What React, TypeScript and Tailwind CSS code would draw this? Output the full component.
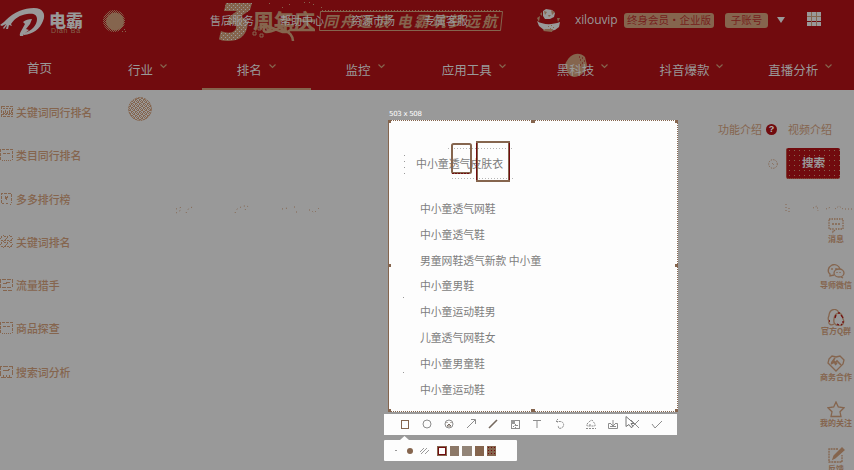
import React from "react";

const FONT = "font-['Noto_Sans_CJK_SC','Noto_Sans',sans-serif]";

const navItems = ["行业", "排名", "监控", "应用工具", "黑科技", "抖音爆款", "直播分析"];
const sideItems = ["关键词同行排名", "类目同行排名", "多多排行榜", "关键词排名", "流量猎手", "商品探查", "搜索词分析"];
const railItems = ["消息", "导师微信", "官方Q群", "商务合作", "我的关注", "反馈"];
const suggestions = [
  "中小童透气网鞋",
  "中小童透气鞋",
  "男童网鞋透气新款 中小童",
  "中小童男鞋",
  "中小童运动鞋男",
  "儿童透气网鞋女",
  "中小童男童鞋",
  "中小童运动鞋",
];

function Logo() {
  return (
    <svg width="46" height="30" viewBox="0 0 46 30" className="shrink-0">
      <path d="M6 12C14 4 24 0 34 0c9 0 12 6 9 13-3 8-10 13-19 14l0-2c8-2 13-8 13-14 0-5-4-6-10-5-7 1-12 4-16 10l1 2-3-1-1 4-2 0 1-4-3 4-1-1 3-4-4 2-2-1 4-3Z" fill="#999" />
      <path d="M23 14c2-2 6-3 9-3l-2 5-4 5 3 1-5 4-1 2-3 0c-1-3 2-6 5-12Z" fill="#999" />
    </svg>
  );
}

function Ball() {
  return (
    <svg width="24" height="24" viewBox="0 0 24 24" className="ml-[18px] mt-1 shrink-0">
      <defs>
        <pattern id="ballDots" width="2" height="2" patternUnits="userSpaceOnUse">
          <path d="M0 0h1v1H0zM1 1h1v1H1z" fill="#85654e" shapeRendering="crispEdges" />
        </pattern>
      </defs>
      <circle cx="12" cy="11" r="11" fill="url(#ballDots)" />
      <circle cx="13" cy="11.500" r="9" fill="#85654e" />
      <path d="M22 19h1v1h-1zM20 21h1v1h-1zM23 21h1v1h-1z" fill="#85654e" />
    </svg>
  );
}

function Seal() {
  return (
    <svg width="24" height="24" viewBox="0 0 24 24" className="mt-[7px]">
      <defs>
        <pattern id="sealDots" width="4" height="4" patternUnits="userSpaceOnUse">
          <path d="M0 0h1v1H0zM2 0h1v1H2zM1 1h2v1H1zM3 2h1v1H3zM0 2h1v1H0zM1 3h1v1H1zM3 3h1v1H3z" fill="#85654e" shapeRendering="crispEdges" />
        </pattern>
      </defs>
      <circle cx="12" cy="12" r="11.500" fill="url(#sealDots)" />
      <circle cx="12" cy="12" r="11.300" fill="none" stroke="#85654e" strokeDasharray="2 1" />
    </svg>
  );
}

function Panda() {
  return (
    <svg width="25" height="25" viewBox="0 0 25 25" className="shrink-0">
      <path d="M7 3l3-2 6 1 3 3-1 4-4 2-5 0-2-3ZM1 13c6 4 15 4 23 1l-1 5-4 3-5 1-6-1-5-4Z" fill="#999" />
      <path d="m8 3 3 1-2 3Zm7-1 4 2-3 3ZM12 7h3l-2 2ZM7 23l2-2h8l-1 3ZM1 10l3-2-1 6ZM21 10l3 0-2 4ZM4 6l2-2 0 4ZM12 18h1v1h-1zM15 17h1v1h-1zM17 19h1v1h-1zM14 20h1v1h-1z" fill="#85654e" />
    </svg>
  );
}

function SideIcon({ index }: { index: number }) {
  return (
    <svg width="13" height="13" viewBox="0 0 13 13" fill="none" stroke="#85654e" strokeWidth="1" className="shrink-0" shapeRendering="crispEdges">
      {index === 0 && <><rect x="1.500" y="1.500" width="11" height="10" strokeDasharray="3 1" /><path d="M3 3.500h8M3 8.500h8M2 9.500h10" strokeDasharray="2 1" /><path d="M3 7.500V6m2 1.500V5m2 2.500V6m2 1.500V5m2 2.500V5" /></>}
      {(index === 1 || index === 5) && <><path d="M.5 12V1.500h12V12" strokeDasharray="3 1" /><path d="M2 12.500h10" strokeDasharray="1 1" /><path d="m3 6 1-1 2 1m1 0 1-1 2 1" /></>}
      {index === 2 && <><path d="M1.500 11V1.500h10V11" strokeDasharray="3 1" /><path d="m2 12 2-1m2 1 2-1m2 1h1M5.500 4v2l1 1 1-3" /></>}
      {index === 3 && <><circle cx="3.500" cy="3.500" r="2.700" strokeDasharray="3 1" /><circle cx="9.500" cy="3.500" r="2.700" strokeDasharray="3 1" /><circle cx="3.500" cy="9.500" r="2.700" strokeDasharray="3 1" /><circle cx="9.500" cy="9.500" r="2.700" strokeDasharray="3 1" /></>}
      {index === 4 && <><path d="M.5 10V1.500h12v7M2 9.500h4M7 9.500h5M3 12.500h9" strokeDasharray="4 1" /><path d="m3 5 2 1 3-2 2 1" /></>}
      {index === 6 && <><path d="M.5 11V1.500h11.500V11M1 12.500h11" strokeDasharray="5 1" /><path d="m3 6 2-1 2 1 3-2M3.500 12v-2M6.500 12v-2M9.500 12v-2" /></>}
    </svg>
  );
}

function RailIcon({ index }: { index: number }) {
  return (
    <svg width="18" height="17" viewBox="0 0 18 17" fill="none" stroke="#85654e" strokeWidth="1.3">
      {index === 0 && <><path d="M2 2h14v10H9l-3 3v-3H2Z" strokeDasharray="1.500 1" /><path d="M5 7h2m1 0h2m1 0h2" strokeWidth="1.600" /></>}
      {index === 1 && <><path d="M7 12 3 13l0-2C0 9 1 4 5 2c4-1 7 1 8 4" /><ellipse cx="12" cy="10" rx="5" ry="4" /><path d="m14 14 2 1M5 5v2M9 5v2M10 9v1M13 9v1" /></>}
      {index === 2 && <><path d="M7 15C4 17 1 15 2 12 0 9 2 8 2 6 3-1 10-1 12 4" /><path d="M8 15c-2-2-1-4-1-5 0-4 3-6 5-6s4 3 4 6c2 3 0 5-1 6-2 1-5 1-7-1Z" /><path d="M12 3v2M9 6 8 9m6-3 2 3m0 3v2m-6 1 2 1m2 0 1-1M2 12h1" stroke="#710b0e" /></>}
      {index === 3 && <><path d="M2 4 5 1l4 1 4-1 4 4-1 4-7 7L1 8Z" /><path d="m8 3-3 4 3 1 2-2 4 4M4 9l4-3m0 4 2-2" strokeWidth="1.600" /></>}
      {index === 4 && <path d="m9 1 2.300 5 5.700.8-4 4 1 4.700H4l1-4.700-4-4L6.700 6Z" />}
      {index === 5 && <><path d="M11 2H2v13h13V8" strokeDasharray="2 .7" /><path d="m7 9 8-8 2 2-9 8-2 1Z" fill="#85654e" /></>}
    </svg>
  );
}

function Tool({ children, className }: { children: React.ReactNode; className: string }) {
  return (
    <span className={`flex shrink-0 justify-center ${className}`}>
      <svg width="12" height="12" viewBox="0 0 12 12" fill="none" stroke="#8d8d8d" strokeWidth="1">
        {children}
      </svg>
    </span>
  );
}

function Banner() {
  return (
    <svg width="310" height="45" viewBox="0 0 310 45" className="absolute left-[204px] top-0" fontFamily="'Noto Sans CJK SC', sans-serif">
      <defs>
        <pattern id="speckle" width="4" height="4" patternUnits="userSpaceOnUse">
          <rect width="4" height="4" fill="#85654e" />
          <path d="M1 1h1v1H1zM3 3h1v1H3z" fill="#999" shapeRendering="crispEdges" />
        </pattern>
      </defs>
      <path d="M22 3h26l-2 7-10 7c7 1 9 4 7 11-2 9-9 13-19 13-5 0-8-1-9-2l2-8c7 3 14 2 15-3 1-4-2-4-9-4l2-7 8-6H20Z" fill="url(#speckle)" />
      <text x="49" y="29" fontSize="20" fontWeight="900" fill="#85654e" textLength="62" lengthAdjust="spacingAndGlyphs">周年庆</text>
      <path d="M58 24 76 31c7 3 12-1 11-4-2-3-8-1-14 2-11 5-16 3-12-2M74 26c8 7 14 5 15 15M87 30h24" stroke="#85654e" strokeWidth="2.500" fill="none" />
      <path d="M54 27h3v3h-3zM49 32h3v3h-3zM56 34h3v3h-3z" fill="none" stroke="#85654e" />
      <path d="M65 3h1v1h-1zM78 7h1v1h-1zM85 4h1v1h-1zM100 2h1v1h-1zM105 2h1v1h-1zM109 4h1v1h-1zM117 7h1v1h-1z" fill="#85654e" />
      <path d="M116.500 11.500h182l-2 19h-181Z" stroke="#85654e" fill="none" />
      <path d="M118 10.500h180" stroke="#85654e" strokeDasharray="1 2" />
      <text x="119" y="27" fontSize="15" fontWeight="700" fontStyle="italic" fill="#85654e" textLength="174">同舟逐浪 电霸筑梦远航</text>
    </svg>
  );
}

function Header() {
  return (
    <header className="relative flex h-[90px] flex-col bg-[#710b0e] text-[#999]">
      <Banner />
      <div className="relative flex h-10 items-center">
        <div className="flex w-[84px] shrink-0 items-center pt-[5px]">
          <Logo />
          <div className="flex flex-col pl-[3px]">
            <span className="whitespace-nowrap text-[17px] font-black leading-[17px]">电霸</span>
            <span className="pl-0.5 font-['Liberation_Sans',sans-serif] text-[7px] leading-[6px] tracking-[0.7px] text-[#85654e]">Dian Ba</span>
          </div>
        </div>
        <Ball />
        <div className="ml-[84px] flex w-[260px] shrink-0 whitespace-nowrap text-[11px] leading-4">
          <span className="w-[70px]">售后服务</span>
          <span className="w-[71px]">帮助中心</span>
          <span className="w-[73px]">资源市场</span>
          <span>专属客服</span>
        </div>
        <div className="ml-[66px] flex shrink-0 items-center">
          <Panda />
          <span className="ml-[14px] w-[42px] whitespace-nowrap font-['Open_Sans','Noto_Sans',sans-serif] text-[12px] leading-4 tracking-[-0.1px]">xilouvip</span>
          <span className="ml-[7px] flex h-[15px] w-[90px] items-center justify-center whitespace-nowrap rounded-[3px] bg-[#85654e] text-[10.500px] text-[#710b0e]/80">终身会员·企业版</span>
          <span className="ml-[11px] flex h-[15px] w-[43px] items-center justify-center whitespace-nowrap rounded-[3px] bg-[#85654e] text-[10.500px] text-[#710b0e]/80">子账号</span>
          <svg width="8" height="6" viewBox="0 0 8 6" className="ml-[9px]"><path d="M0 0h8L4 6Z" fill="#999" /></svg>
          <svg width="14" height="14" viewBox="0 0 14 14" className="-mt-0.5 ml-[22px]" shapeRendering="crispEdges">
            <path d="M4.500 0v14M9.500 0v14M0 4.500h14" stroke="#85654e" />
            {[0, 5, 10].map((y) => [0, 5, 10].map((x) => <rect key={`${x}-${y}`} x={x} y={y} width="4" height="4" fill="#999" />))}
          </svg>
        </div>
      </div>
      <nav className="relative flex h-[50px] text-[12.500px] leading-[18px]">
        <span className="w-[93px] shrink-0 pl-[27px] pt-[19px]">首页</span>
        {navItems.map((name, i) => (
          <div key={name} className={`relative flex w-[108.800px] shrink-0 justify-center pt-[21px] ${i === 1 ? "border-b-2 border-[#85654e]" : ""}`}>
            {i === 4 && (
              <svg width="28" height="24" viewBox="0 0 28 24" className="absolute left-[32px] top-[13px]">
                <path d="M5 12C8 2 18-3 25 4l2 8c-1 7-7 12-13 12-5-1-6-3-9-12Z" fill="#85654e" />
                <path d="M19 4h1m2 1h1m-3 2h1m3 1h1m-3 2h1m-3 2h1" stroke="#710b0e" />
              </svg>
            )}
            <span className="relative">{name}</span>
            <svg width="7" height="5" viewBox="0 0 7 5" className="relative ml-[7px] mt-[3px]" fill="none" stroke="#85654e" strokeWidth="1.200"><path d="m.5.500 3 3 3-3" /></svg>
          </div>
        ))}
      </nav>
    </header>
  );
}

function Capture() {
  return (
    <div className="absolute left-[384px] top-[109px] w-[294px]">
      <div className="h-[11px] pl-[5px] font-['DejaVu_Sans',sans-serif] text-[7px] leading-[10px] tracking-[-0.300px] text-white">503 x 508</div>
      <div className="relative ml-[4px] h-[292px] w-[290px] border border-dotted border-[#85654e] bg-[#fdfdfd] [border-left-style:solid]">
        <div className="pl-[27px] pt-[33px] text-[10.900px] leading-[18px] text-[#7d7d7d]">中小童透气皮肤衣</div>
        <ul className="mt-[24px] pl-[31px] text-[10.800px] text-[#7d7d7d]">
          {suggestions.map((s) => <li key={s} className="h-[25.800px] whitespace-pre leading-[25.800px]">{s}</li>)}
        </ul>
        <svg width="290" height="292" viewBox="0 0 290 292" className="absolute -left-px -top-px" fill="none">
          <path d="M60 28.500h64M64 58.500h62" stroke="#b5b5b5" strokeDasharray="1 2" />
          <path d="M16.500 35v20" stroke="#999" strokeDasharray="1 5" />
          <rect x="64" y="24" width="19" height="29" rx="1.500" stroke="#85654e" strokeWidth="2" />
          <path d="M64 53.500h18" stroke="#710b0e" strokeDasharray="2 1" />
          <rect x="89" y="22" width="32" height="39" stroke="#85654e" strokeWidth="2" />
          <path d="M88.500 23v37M121.500 23v37" stroke="#710b0e" />
          <path d="M0 0h3v3H0zM143 0h4v3h-4zM287 0h3v3h-3zM0 144h3v3H0zM287 144h3v3h-3zM0 289h3v3H0zM143 289h4v3h-4zM287 289h3v3h-3z" fill="#85654e" />
          <path d="M15 177h1v1h-1zM15 252h1v1h-1z" fill="#999" />
        </svg>
      </div>
      <div className="mt-[2px] flex h-[21px] w-[293px] items-center bg-[#fdfdfd] pb-0.5 pl-[10px]">
        <Tool className="w-[22px]"><rect x="2.500" y="2.500" width="7" height="8" stroke="#85654e" /></Tool>
        <Tool className="w-[22px]"><circle cx="6" cy="6" r="4" /></Tool>
        <Tool className="w-[22px]"><circle cx="6" cy="6" r="4" /><path d="M4 5V4m4 1V4M4 8l2-2 2 2Z" stroke="#75695f" /></Tool>
        <Tool className="w-[22px]"><path d="m2 10 8-8M6 1.500h4.500V6" /></Tool>
        <Tool className="w-[22px]"><path d="m2 10 2-2 6-6" stroke="#75695f" strokeWidth="1.600" /></Tool>
        <Tool className="w-[22px]"><rect x="2.500" y="2.500" width="8" height="8" /><path d="M2 2h4v4H2z" fill="#999" stroke="none" /><path d="M6.500 6v4M7 7.500h3M4 9l2-2" strokeDasharray="2 1" /></Tool>
        <Tool className="w-[22px]"><path d="M2 2.500h8M6 3v7" /></Tool>
        <Tool className="w-[24px]"><path d="M4 1 2 3l2 2M2 3.500h4c5 0 5 7-1 7l-1-3" strokeDasharray="2 .7" /></Tool>
        <Tool className="ml-2 w-[22px]"><path d="m2 6 3-3 2-1 3 4v2H2V6M1 10.500h10M4 7h3" strokeDasharray="2 1" /></Tool>
        <Tool className="w-[22px]"><path d="M6 2v6M4 6l2 2 2-2M4 5.500H1.500v5h9v-5H8M3 8.500h6" /></Tool>
        <Tool className="w-[22px]"><path d="m2 2 8 8m0-8-8 8" /></Tool>
        <Tool className="w-[22px]"><path d="m1 6 3 4 7-7" /></Tool>
      </div>
      <svg width="9" height="5" viewBox="0 0 9 5" className="ml-[16px] block"><path d="M0 5 4.500 1 9 5Z" fill="#fdfdfd" /></svg>
      <div className="flex h-[21px] w-[133px] items-center rounded-[1px] bg-[#fdfdfd] pl-[11px]">
        <span className="h-px w-[2px] bg-[#999]" />
        <span className="ml-[10px] h-[6px] w-[6px] rounded-full bg-[#85654e]" />
        <svg width="10" height="8" viewBox="0 0 10 8" className="ml-[7px]" stroke="#999"><path d="m0 5 4-4M1 7l6-6M5 7l4-4" /></svg>
        <div className="ml-[7px] flex gap-[3px]">
          <span className="h-[10px] w-[10px] border-2 border-[#710b0e] bg-[#fdfdfd] outline-1 -outline-offset-1 outline-[#85654e]" />
          <span className="h-[10px] w-[9px] bg-[#8c7867]" />
          <span className="h-[10px] w-[10px] bg-[#928477]" />
          <span className="h-[10px] w-[9px] bg-[#85654e]" />
          <span className="h-[10px] w-[9px] bg-[#85654e] bg-[radial-gradient(#710b0e_0.700px,transparent_0.800px)] bg-[size:3px_3px]" />
        </div>
      </div>
      <svg width="10" height="13" viewBox="0 0 10 13" className="absolute left-[241px] top-[307px]"><path d="M1 .500v10l3-2 2 3 2-1-2-3h3Z" fill="#fff" stroke="#777" /></svg>
    </div>
  );
}

export default function App() {
  return (
    <div className={`relative flex h-[470px] w-[854px] flex-col overflow-hidden bg-[#999] ${FONT}`}>
      <Header />
      <main className="flex flex-1 text-[#85654e]">
        <aside className="flex w-[128px] shrink-0 flex-col">
          {sideItems.map((s, i) => (
            <div key={s} className="flex h-[43.300px] shrink-0 items-start gap-[3px] pt-[15px]">
              <SideIcon index={i} />
              <span className="whitespace-nowrap text-[10.900px] font-medium leading-[14px]">{s}</span>
            </div>
          ))}
        </aside>
        <section className="flex min-w-0 flex-1 flex-col">
          <Seal />
          <svg width="150" height="12" viewBox="0 0 150 12" className="ml-[47px] mt-[84px]" stroke="#85654e" fill="none">
            <path d="m1 4 6-2m-6 6 5-3m5 3 3-5 4-1M60 8l2-4 6-3 5 0-3 4M107 4l6-1m6-1h4m-2 5h4m9-2h2l3 3 6-6" strokeDasharray="1 3" />
          </svg>
        </section>
        <section className="relative flex w-[150px] shrink-0 flex-col pt-[31px]">
          <div className="flex items-center pl-[14px] text-[11px] leading-4">
            <span>功能介绍</span>
            <span className="ml-[4px] flex h-[11px] w-[11px] items-center justify-center rounded-full bg-[#710b0e] font-['Liberation_Sans',sans-serif] text-[9px] font-bold leading-[11px] text-[#b5b5b5]">?</span>
            <span className="ml-[11px]">视频介绍</span>
          </div>
          <div className="mt-[11px] flex items-center pl-[64px]">
            <svg width="10" height="10" viewBox="0 0 10 10" fill="none" stroke="#85654e"><circle cx="5" cy="5" r="4.300" strokeDasharray="1.300 1.200" /><path d="m4 4 2 2" strokeDasharray="1 1" /></svg>
            <div className="ml-[8px] flex h-[31px] w-[54px] items-center justify-center rounded-[2px] border-b border-l border-dotted border-[#85654e] bg-[#710b0e] bg-[radial-gradient(#85654e_0.600px,transparent_0.700px)] bg-[size:5px_5px] text-[11.500px] font-bold text-[#999]">搜索</div>
          </div>
          <svg width="69" height="10" viewBox="0 0 69 10" className="ml-[81px] mt-[25px]" stroke="#85654e" fill="none"><path d="M1 0v8m3-4v5M28 4l4-2 1 5m8-2 5-2m4 2 4-3 4 3h9" strokeDasharray="1 2" /></svg>
          <div className="ml-[114px] mt-[3px] flex w-[36px] flex-col">
            {railItems.map((s, i) => (
              <div key={s} className="flex h-[46px] shrink-0 flex-col items-center">
                <RailIcon index={i} />
                <span className="whitespace-nowrap text-[8px] font-bold leading-[10px]">{s}</span>
              </div>
            ))}
          </div>
        </section>
      </main>
      <Capture />
    </div>
  );
}
